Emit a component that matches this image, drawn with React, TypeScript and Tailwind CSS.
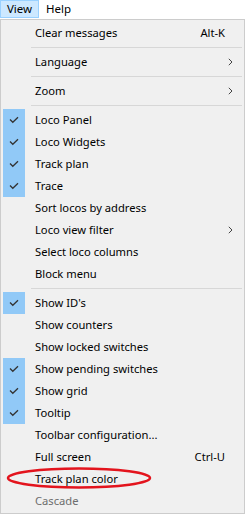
const font = { fontFamily: '"Segoe UI", "Noto Sans", sans-serif' }

type Item =
  | { sep: true }
  | { label: string; checked?: boolean; shortcut?: string; sub?: boolean; disabled?: boolean; sep?: false }

const items: Item[] = [
  { label: 'Clear messages', shortcut: 'Alt-K' },
  { sep: true },
  { label: 'Language', sub: true },
  { sep: true },
  { label: 'Zoom', sub: true },
  { sep: true },
  { label: 'Loco Panel', checked: true },
  { label: 'Loco Widgets', checked: true },
  { label: 'Track plan', checked: true },
  { label: 'Trace', checked: true },
  { label: 'Sort locos by address' },
  { label: 'Loco view filter', sub: true },
  { label: 'Select loco columns' },
  { label: 'Block menu' },
  { sep: true },
  { label: "Show ID's", checked: true },
  { label: 'Show counters' },
  { label: 'Show locked switches' },
  { label: 'Show pending switches', checked: true },
  { label: 'Show grid', checked: true },
  { label: 'Tooltip', checked: true },
  { label: 'Toolbar configuration...' },
  { label: 'Full screen', shortcut: 'Ctrl-U' },
  { label: 'Track plan color' },
  { label: 'Cascade', disabled: true },
]

function Check() {
  return (
    <svg width="10" height="8" viewBox="0 0 10 8" fill="none">
      <path d="M1 3.5 L3.8 6.3 L9 1.2" stroke="#333" strokeWidth="1.3" />
    </svg>
  )
}

function Chevron() {
  return (
    <svg width="5" height="8" viewBox="0 0 5 8" fill="none">
      <path d="M0.8 0.8 L4 4 L0.8 7.2" stroke="#444" strokeWidth="1" />
    </svg>
  )
}

export default function App() {
  return (
    <div className="relative w-[246px] h-[515px] bg-white overflow-hidden text-[11.2px] text-black" style={font}>
      {/* menu bar */}
      <div className="flex h-[19px] items-start text-[11.5px]">
        <div className="h-[18px] w-[39px] bg-[#cce8ff] border border-[#99d1ff] flex items-center justify-center leading-none">
          View
        </div>
        <div className="h-[18px] px-[7px] flex items-center leading-none">Help</div>
      </div>

      {/* dropdown */}
      <div className="w-[245px] h-[495px] border border-[#cccccc] bg-[#f0f0f0] pt-[2px]">
        {items.map((it, i) =>
          it.sep ? (
            <div key={i} className="h-[7px] flex items-center pl-[30px] pr-[2px]">
              <div className="h-px w-full bg-[#d7d7d7]" />
            </div>
          ) : (
            <div key={i} className="h-[22px] flex items-center">
              <div className={`w-[22px] h-[22px] ml-[2px] flex items-center justify-center ${it.checked ? 'bg-[#91c9f7]' : ''}`}>
                {it.checked && <Check />}
              </div>
              <span className={`ml-[10px] flex-1 whitespace-nowrap ${it.disabled ? 'text-[#6d6d6d]' : ''}`}>{it.label}</span>
              {it.shortcut && <span className="mr-[19px]">{it.shortcut}</span>}
              {it.sub && (
                <span className="mr-[11px] flex items-center">
                  <Chevron />
                </span>
              )}
            </div>
          )
        )}
      </div>

      {/* red annotation ellipse */}
      <svg className="absolute left-0 top-0 pointer-events-none" width="246" height="515">
        <ellipse cx="79" cy="478" rx="71" ry="9.5" fill="none" stroke="#e3141d" strokeWidth="2.5" />
      </svg>
    </div>
  )
}
